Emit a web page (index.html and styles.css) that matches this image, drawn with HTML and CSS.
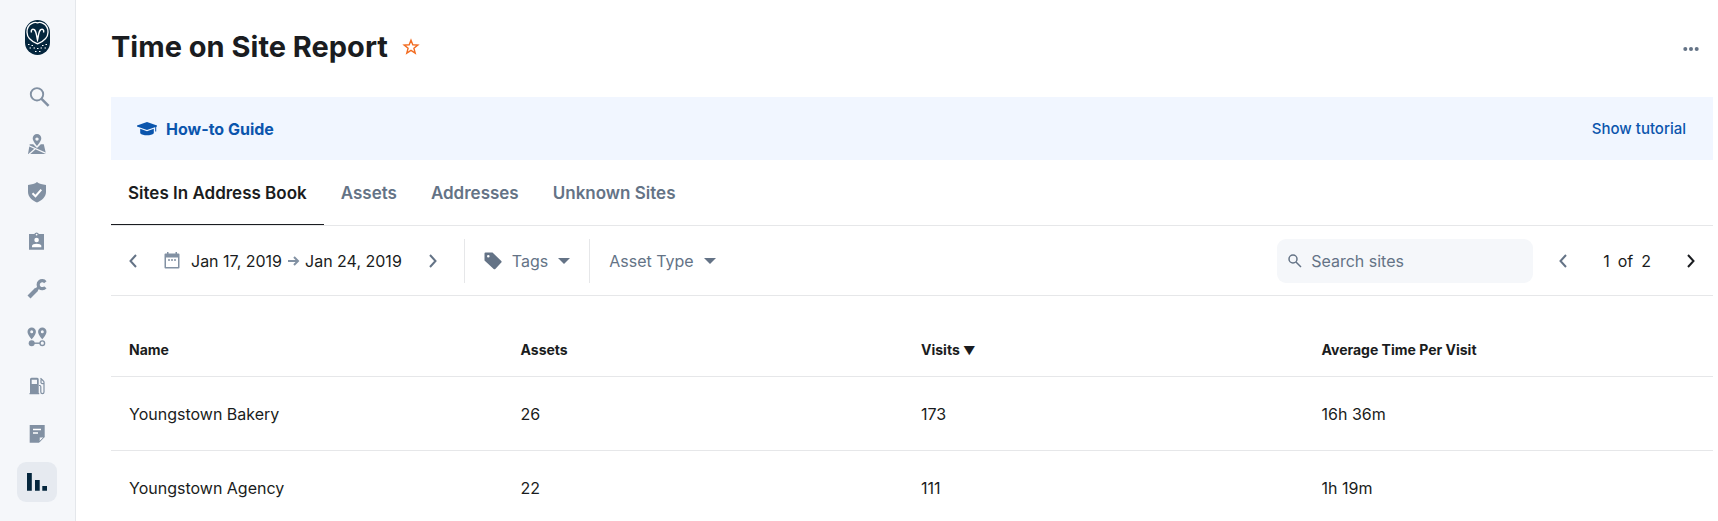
FILE: index.html
```html
<!doctype html>
<html lang="en">
<head>
    <meta charset="utf-8">
    <title>Time on Site Report</title>
    <link rel="stylesheet" href="styles.css">
</head>
<body>
<aside class="sidebar">
    <a href="#" class="logo" aria-label="Home">
        <svg width="27" height="35" viewBox="0 0 27 35">
            <rect x="1" width="25" height="35" rx="12.5" fill="#04263d"/>
            <path d="M13.5 2.8C11.5 1.8 3 3 3 12.2c0 6 5 9.4 10.5 11.6C19 21.600 24 18.200 24 12.200 24 3 15.500 1.800 13.500 2.800z" fill="none" stroke="#fff" stroke-width="1.300"/>
            <path d="M7.500 12.500c-1-2.500 1-3.800 2.500-3 2.500 1.200 2.500 7 3.500 10.500 1-3.500 1-9.300 3.500-10.500 1.500-.8 3.500.5 2.500 3" fill="none" stroke="#fff" stroke-width="1.400"/>
            <path d="M4 24.500h1.500M7.500 25.500h1.500M18 25.500h1.500M21.500 24.500h1.500M5.500 28h1.500M9.500 28h1.500M13 28.500h1.500M16.500 28h1.500M20.500 28h1.500M11 31.500h1.500M15 31.500h1.500" stroke="#fff" stroke-width="1.200"/>
        </svg>
    </a>
    <nav class="nav">
        <a href="#" aria-label="Search">
            <svg width="20" height="20" viewBox="-1 1 20 20"><g fill="none" stroke="currentColor"><circle cx="9" cy="7.300" r="6.200" stroke-width="1.900"/><path d="M13.300 11.700l7.300 7.200" stroke-width="2.500"/></g></svg>
        </a>
        <a href="#" aria-label="Map">
            <svg width="20" height="20" viewBox="0 2 20 20"><path fill="currentColor" fill-rule="evenodd" d="M10 0a4.300 4.300 0 0 1 4.300 4.300C14.300 7.500 10 12 10 12S5.700 7.500 5.700 4.300A4.300 4.300 0 0 1 10 0zm0 3.400a1.700 1.700 0 1 0 0 3.400 1.700 1.700 0 0 0 0-3.400z"/><path fill="currentColor" d="M2.700 10.200h3.500L10 14l3.800-3.800h3L19 20H1z"/><path d="M1.500 11.500L19 19.300M2 20.200l6-5.300" stroke="#f5f7fa" stroke-width="1.300"/></svg>
        </a>
        <a href="#" aria-label="Safety">
            <svg width="20" height="20" viewBox="0 2 20 20"><path fill="currentColor" d="M10 0C8 1.800 4.500 2.700 1 2.900V10c0 5 4.500 8.600 9 10.400 4.500-1.800 9-5.400 9-10.400V2.900C15.500 2.700 12 1.800 10 0z"/><path d="M5.500 11.200l3 3 5.800-6.600" fill="none" stroke="#fff" stroke-width="2"/></svg>
        </a>
        <a href="#" aria-label="Drivers">
            <svg width="20" height="20" viewBox="0 1 20 20"><path fill="currentColor" d="M2 3h5.300a2.500 2.500 0 0 1 4.600 0H17v15.700H2z"/><circle cx="9.600" cy="3.600" r=".9" fill="#fff"/><circle cx="9.600" cy="9" r="2.300" fill="#fff"/><path d="M5 16.300v-1.500c0-2.800 9.300-2.800 9.300 0v1.500z" fill="#fff"/></svg>
        </a>
        <a href="#" aria-label="Maintenance">
            <svg width="20" height="20" viewBox="0 1 20 20"><path d="M18.300 3.200A4 4 0 1 0 18.300 8.200" fill="none" stroke="currentColor" stroke-width="3.200"/><path d="M12 8L8.300 11.700" stroke="currentColor" stroke-width="3"/><path d="M9.700 10.300L2 18" stroke="currentColor" stroke-width="4.200"/></svg>
        </a>
        <a href="#" aria-label="Routes">
            <svg width="20" height="20" viewBox="0 1 20 20"><path id="pin" fill="currentColor" fill-rule="evenodd" d="M4.700.500a4.200 4.200 0 0 1 4.200 4.200c0 3-4.200 7.600-4.200 7.600S.500 7.700.500 4.700A4.200 4.200 0 0 1 4.700.500zm0 2.800a1.500 1.500 0 1 0 0 3 1.500 1.500 0 0 0 0-3z"/><use href="#pin" x="10.600"/><circle cx="4.700" cy="16.200" r="3" fill="currentColor"/><path d="M5 16.200h8" stroke="currentColor" stroke-width="1.400"/><circle cx="15.300" cy="16.200" r="2.300" fill="none" stroke="currentColor" stroke-width="1.400"/></svg>
        </a>
        <a href="#" aria-label="Fuel">
            <svg width="20" height="20" viewBox="0 0 20 20"><path fill="currentColor" fill-rule="evenodd" d="M3 3.200q0-1.500 1.500-1.500h5.700q1.500 0 1.500 1.500V17h.5v1.300H2.500V17H3zm1.700.5V8H10V3.700z"/><path d="M12 9.500h.8q1 0 1 1.300V16q0 1.600 1.600 1.600T17 16V6.500q0-1-.8-1.700l-2.700-2.500M14 3.500v3.200q.8 1.500 3 .8" fill="none" stroke="currentColor" stroke-width="1.200"/></svg>
        </a>
        <a href="#" aria-label="Documents">
            <svg width="20" height="20" viewBox="0 -1 20 20"><path fill="currentColor" d="M2.700 0h15v11.500L12 17.700H2.700z"/><path d="M12.200 17v-5h5z" fill="#f5f7fa" stroke="currentColor" stroke-width="1"/><path d="M6 4.500h8M6 8h5" stroke="#fff" stroke-width="1.400"/></svg>
        </a>
        <a href="#" class="active" aria-label="Reports">
            <svg width="20" height="20" viewBox="0 0 20 20"><path fill="currentColor" d="M0 1h4.800v17.700H0zM8 8h4.700v10.700H8zM15.300 14H20v4.700h-4.700z"/></svg>
        </a>
    </nav>
</aside>

<main class="content">
    <header class="page-header">
        <h1>Time on Site Report</h1>
        <button type="button" class="star" aria-label="Favorite">
            <svg width="18" height="18" viewBox="0 0 18 18"><path d="M9 2.200l1.800 4.600 5 .3-3.900 3.100 1.300 4.900L9 12.400l-4.200 2.700 1.300-4.900-3.900-3.100 5-.3z" fill="none" stroke="currentColor" stroke-width="1.400"/></svg>
        </button>
        <button type="button" class="more" aria-label="More">
            <svg width="16" height="4" viewBox="0 0 16 4" fill="currentColor"><circle cx="2.300" cy="2" r="2"/><circle cx="8" cy="2" r="2"/><circle cx="13.700" cy="2" r="2"/></svg>
        </button>
    </header>

    <section class="guide">
        <svg width="20" height="14" viewBox="0 0 20 14"><path d="M10 0l10 3.600v.8L10 8 0 4.400v-.8z" fill="currentColor"/><path d="M3.200 6.700L10 9.300l6.800-2.600v4.500C14.500 14 5.500 14 3.200 11.200zM18.200 4.500h1v5h-1z" fill="currentColor"/></svg>
        <h2>How-to Guide</h2>
        <a href="#">Show tutorial</a>
    </section>

    <nav class="tabs">
        <a href="#" class="active">Sites In Address Book</a>
        <a href="#">Assets</a>
        <a href="#">Addresses</a>
        <a href="#">Unknown Sites</a>
    </nav>

    <div class="toolbar">
        <div class="dates">
            <button type="button" aria-label="Previous dates"><svg width="8" height="14" viewBox="0 0 8 14"><path d="M7 1L1.500 7 7 13"/></svg></button>
            <button type="button" class="range">
                <svg class="calendar" width="16" height="17" viewBox="0 0 16 17"><path fill="currentColor" fill-rule="evenodd" d="M3 0h1.500v1.500h7V0H13v1.500h1.500q1 0 1 1V15.500q0 1-1 1h-13q-1 0-1-1V2.500q0-1 1-1H3zM2 5.500V15h12V5.500z"/><path d="M4 8h2M7 8h2M10 8h2" stroke="currentColor" stroke-width="1.500"/></svg>
                <span>Jan 17, 2019</span>
                <svg class="arrow" width="11" height="10" viewBox="0 0 11 10"><path d="M0 5h10M6 1l4 4-4 4"/></svg>
                <span>Jan 24, 2019</span>
            </button>
            <button type="button" aria-label="Next dates"><svg width="8" height="14" viewBox="0 0 8 14"><path d="M1 1l5.500 6L1 13"/></svg></button>
        </div>
        <button type="button" class="filter">
            <svg width="18" height="18" viewBox="0 0 18 18"><path fill="currentColor" fill-rule="evenodd" d="M1.500.5h7L17.300 9q.7.800 0 1.600l-6 6.400q-.8.700-1.600 0L.5 8.500v-7q0-1 1-1zM4.300 3a1.300 1.300 0 1 0 0 2.600 1.300 1.300 0 0 0 0-2.600z"/></svg>
            Tags
            <span class="caret"></span>
        </button>
        <button type="button" class="filter">
            Asset Type
            <span class="caret"></span>
        </button>
        <label class="search">
            <svg width="14" height="14" viewBox="0 0 14 14"><circle cx="5" cy="5" r="4"/><path d="M8 8l5 5"/></svg>
            <input type="text" placeholder="Search sites" aria-label="Search sites">
        </label>
        <div class="pager">
            <button type="button" aria-label="Previous page"><svg width="8" height="14" viewBox="0 0 8 14"><path d="M7 1L1.500 7 7 13"/></svg></button>
            <span class="pages"><span>1</span><span>of</span><span>2</span></span>
            <button type="button" class="next" aria-label="Next page"><svg width="8" height="14" viewBox="0 0 8 14"><path d="M1 1l5.500 6L1 13"/></svg></button>
        </div>
    </div>

    <table>
        <thead>
        <tr>
            <th>Name</th>
            <th>Assets</th>
            <th>Visits <span class="sort">▼</span></th>
            <th>Average Time Per Visit</th>
        </tr>
        </thead>
        <tbody>
        <tr>
            <td>Youngstown Bakery</td>
            <td>26</td>
            <td>173</td>
            <td>16h 36m</td>
        </tr>
        <tr>
            <td>Youngstown Agency</td>
            <td>22</td>
            <td>111</td>
            <td>1h 19m</td>
        </tr>
        </tbody>
    </table>
</main>
</body>
</html>
```
FILE: styles.css
```css
* {
    box-sizing: border-box;
}
body {
    display: flex;
    min-height: 100vh;
    margin: 0;
    font-family: Inter, "Liberation Sans", sans-serif;
    font-size: 16px;
    line-height: 24px;
    color: #1a1c20;
    background-color: #fff;
}
a {
    color: inherit;
    text-decoration: none;
}
button {
    display: flex;
    align-items: center;
    padding: 0;
    border: none;
    background: none;
    font: inherit;
    color: inherit;
    cursor: pointer;
}
svg {
    display: block;
    flex: none;
    overflow: visible;
}

/* sidebar */
.sidebar {
    flex: none;
    width: 76px;
    padding-top: 20px;
    background-color: #f5f7fa;
    border-right: 1px solid #e4e7eb;
}
.logo {
    display: flex;
    justify-content: center;
    margin-bottom: 23px;
}
.nav {
    display: flex;
    flex-direction: column;
    align-items: center;
    gap: 8px;
    padding-right: 1px;
    color: #8291a3;
}
.nav a {
    display: flex;
    align-items: center;
    justify-content: center;
    width: 40px;
    height: 40px;
    border-radius: 9px;
}
.nav .active {
    background-color: #e6eaf0;
    color: #04263d;
}

/* header */
.content {
    flex: 1;
    padding: 0 5px 0 35px;
}
.page-header {
    display: flex;
    align-items: center;
    gap: 14px;
    height: 97px;
    padding: 0 14px 4px 0;
}
h1 {
    margin: 0;
    font-size: 29px;
    line-height: 36px;
}
.star {
    color: #f26c21;
}
.more {
    margin-left: auto;
    padding-top: 4px;
    color: #647386;
}
.guide {
    display: flex;
    align-items: center;
    gap: 9px;
    height: 63px;
    padding: 0 27px 0 26px;
    background-color: #f1f6ff;
    color: #0b55ad;
}
.guide h2 {
    margin: 0;
    font-size: 16px;
    font-weight: 700;
}
.guide a {
    margin-left: auto;
    font-size: 15px;
    font-weight: 500;
}

/* tabs */
.tabs {
    display: flex;
    height: 66px;
    border-bottom: 1px solid #e6e7e9;
    font-size: 17px;
    font-weight: 600;
    color: #647386;
}
.tabs a {
    padding: 21px 17px 19px;
}
.tabs .active {
    border-bottom: 1px solid #1a1c20;
    color: #1a1c20;
}

/* toolbar */
.toolbar {
    display: flex;
    align-items: center;
    height: 70px;
    border-bottom: 1px solid #e6e7e9;
}
.dates {
    display: flex;
    align-items: center;
    gap: 27px;
    padding: 0 27px 0 18px;
    color: #647386;
}
.range {
    gap: 6px;
}
.range span {
    color: #1a1c20;
}
.calendar {
    margin-right: 5px;
    color: #8291a3;
}
.dates button > svg:not(.calendar),
.pager svg {
    fill: none;
    stroke: currentColor;
    stroke-width: 2;
}
.search svg {
    fill: none;
    stroke: currentColor;
    stroke-width: 1.5;
}
.dates .arrow {
    color: #8291a3;
    stroke-width: 1;
}
.filter {
    gap: 10px;
    height: 44px;
    padding: 0 19px;
    border-left: 1px solid #e6e7e9;
    color: #647386;
}
.caret {
    border: 6px solid transparent;
    border-top-color: currentColor;
    border-bottom: none;
}
.search {
    display: flex;
    align-items: center;
    gap: 9px;
    width: 256px;
    height: 44px;
    margin-left: auto;
    padding: 0 11px;
    border-radius: 9px;
    background-color: #f5f7fa;
    color: #647386;
}
.search input {
    flex: 1;
    min-width: 0;
    padding: 0;
    border: none;
    outline: none;
    background: none;
    font: inherit;
    color: #1a1c20;
}
.search input::placeholder {
    color: #647386;
}
.pager {
    display: flex;
    align-items: center;
    gap: 36px;
    padding: 0 18px 0 26px;
    color: #647386;
}
.pages {
    display: flex;
    gap: 8px;
    color: #1a1c20;
}
.next {
    color: #1a1c20;
}

/* table */
table {
    width: 100%;
    margin-top: 25px;
    border-collapse: collapse;
    table-layout: fixed;
}
th, td {
    height: 74px;
    padding: 2px 9px 0;
    border-bottom: 1px solid #e6e7e9;
    text-align: left;
}
th {
    height: 55px;
    padding-top: 4px;
    font-size: 14px;
    font-weight: 700;
}
th:first-child, td:first-child {
    padding-left: 18px;
}
.sort {
    font-size: 12px;
}
```
